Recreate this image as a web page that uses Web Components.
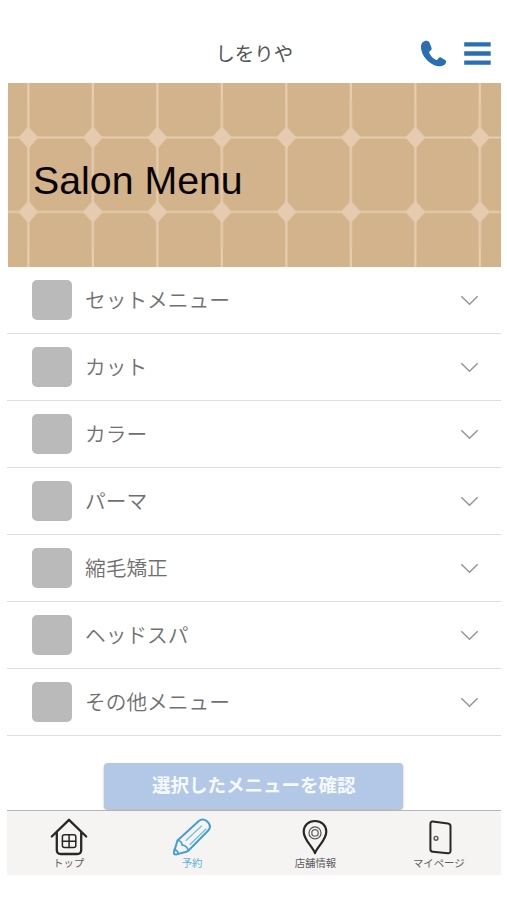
<!DOCTYPE html>
<html lang="ja">
<head>
<meta charset="utf-8">
<meta name="viewport" content="width=device-width, initial-scale=1">
<title>しをりや</title>
<style>
html, body { margin: 0; background: #fff; }
body { font-family: "Noto Sans CJK JP", "Liberation Sans", sans-serif; }
</style>
</head>
<body>
<salon-app></salon-app>
<script>
function define(name, html) {
  customElements.define(name, class extends HTMLElement {
    constructor() {
      super();
      const t = document.createElement('template');
      t.innerHTML = html;
      this.attachShadow({ mode: 'open' }).appendChild(t.content.cloneNode(true));
    }
  });
}

define('salon-header', `
<style>
:host { display: grid; grid-template-columns: 1fr auto 1fr; align-items: center; height: 60px; padding: 23px 9.5px 0 9.5px; box-sizing: content-box; }
h1 { grid-column: 2; margin: 0 0 0 1px; font-size: 19.4px; font-weight: 400; line-height: 28px; color: #555; white-space: nowrap; }
nav { justify-self: end; display: flex; gap: 17px; align-items: center; }
svg { display: block; }
</style>
<h1><slot></slot></h1>
<nav>
<svg width="27" height="27" viewBox="0 0 27 27" fill="#2b6fb3"><path d="M4.200 1.300C2 2.200.500 4.600 1 8c.7 5.400 3.700 10.500 8 14 3.900 3.200 8.800 4.900 12.500 4.100 2.300-.5 4.200-1.900 4.500-3.900.2-1.100-.1-1.700-.9-2.200l-3.800-2.300c-1-.6-1.900-.4-2.600.4l-1.200 1.400c-.5.6-1.100.7-1.800.300-2.900-1.700-5-3.900-6.400-6.900-.3-.7-.2-1.200.4-1.700l1.200-1c.8-.7 1-1.500.6-2.500L9.600 2.800C8.800.9 6.500.3 4.200 1.300z"/></svg>
<svg width="27" height="23" viewBox="0 0 27 23" fill="#2b6fb3"><path d="M.2.200h26.500v4.400H.2zM.2 9.300h26.500v4.400H.2zM.2 18.400h26.500v4.400H.2z"/></svg>
</nav>`);

define('salon-banner', `
<style>
:host { display: grid; height: 184px; margin-left: .5px; background: #d3b38b; overflow: hidden; }
svg, h2 { grid-area: 1 / 1; }
svg { display: block; }
h2 { margin: 0; align-self: center; padding: 10px 0 0 25.5px; font: 400 39.3px/46px "Liberation Sans", sans-serif; color: #080402; z-index: 1; }
</style>
<svg width="494" height="184" viewBox="7.500 83 494 184">
<defs><pattern id="tile" x="-4.400" y="100.300" width="64.500" height="74.400" patternUnits="userSpaceOnUse">
<path d="M32.250 0V74.400M0 37.200H64.500" stroke="#e6cdb0" stroke-width="2.200"/>
<path d="M32.250 26L42.200 37.200 32.250 48.400 22.300 37.200z" fill="#e5ccb0"/></pattern></defs>
<rect x="7" y="100.300" width="495" height="148.800" fill="url(#tile)"/>
<path d="M27.850 83v18M92.350 83v18M156.850 83v18M221.350 83v18M285.850 83v18M350.350 83v18M414.850 83v18M479.350 83v18M27.850 249v18M92.350 249v18M156.850 249v18M221.350 249v18M285.850 249v18M350.350 249v18M414.850 249v18M479.350 249v18" stroke="#e6cdb0" stroke-width="2.200"/>
</svg>
<h2><slot></slot></h2>`);

define('menu-row', `
<style>
:host { display: flex; align-items: center; box-sizing: border-box; height: 67px; padding: 0 21.5px 0 24.500px; border-bottom: 1.500px solid #dedede; color: #707070; }
i { width: 40px; height: 40px; border-radius: 5px; background: #bababa; flex: none; }
span { flex: 1; margin-left: 13.500px; padding-bottom: 2px; font-size: 20.700px; line-height: 30px; font-weight: 350; white-space: nowrap; }
svg { display: block; }
</style>
<i></i><span><slot></slot></span>
<svg width="19" height="11" viewBox="0 0 19 11" fill="none" stroke="#969696" stroke-width="1.500"><path d="M1.300 1.200l8.200 8 8.200-8"/></svg>`);

define('confirm-button', `
<style>
:host { display: flex; justify-content: center; padding-top: 27px; }
button { width: 299px; height: 46px; padding: 0 0 4px; border: 0; border-radius: 4px; background: #b3c8e6; box-shadow: 0 1px 2px #aaa; color: #f5faff; font: 700 18.500px/26px "Noto Sans CJK JP", sans-serif; white-space: nowrap; }
</style>
<button type="button"><slot></slot></button>`);

define('tab-item', `
<style>
:host { display: flex; flex-direction: column; align-items: center; color: #5d5d5d; }
:host([active]) { color: #62b1dc; }
div { height: 37px; }
span { font-size: 10.400px; line-height: 15px; white-space: nowrap; }
</style>
<div><slot name="icon"></slot></div><span><slot></slot></span>`);

define('tab-bar', `
<style>
:host { display: grid; grid-template-columns: repeat(4, 1fr); box-sizing: border-box; height: 65px; margin-top: 1px; padding-top: 7px; border-top: 1.500px solid #b5b5b5; background: #f5f4f3; position: relative; }
</style><slot></slot>`);

define('salon-app', `
<style>
:host { display: block; width: 493.500px; margin-left: 7px; }
tab-item svg { display: block; }
</style>
<salon-header>しをりや</salon-header>
<salon-banner>Salon Menu</salon-banner>
<menu-row>セットメニュー</menu-row>
<menu-row>カット</menu-row>
<menu-row>カラー</menu-row>
<menu-row>パーマ</menu-row>
<menu-row>縮毛矯正</menu-row>
<menu-row>ヘッドスパ</menu-row>
<menu-row>その他メニュー</menu-row>
<confirm-button>選択したメニューを確認</confirm-button>
<tab-bar>
<tab-item><svg slot="icon" width="38" height="38" viewBox="0 0 38 38" fill="none" stroke="#272727" stroke-width="2.300" stroke-linecap="round" stroke-linejoin="round"><path d="M1.800 18.500L19 1.800l17.200 16.700M6.800 14.500V32q0 4 4 4h16.400q4 0 4-4V14.500"/><rect x="12.400" y="16.800" width="13.400" height="12.800" rx="2" stroke-width="1.500"/><path d="M19.100 16.800v12.800M12.400 23.200h13.400" stroke-width="1.500"/></svg>トップ</tab-item>
<tab-item active><svg slot="icon" width="38" height="38" viewBox="0 0 38 38" fill="none" stroke="#429fd5" stroke-width="2" stroke-linecap="round" stroke-linejoin="round"><path d="M4.500 22.500L25.500 3.200q4-3.300 8.200-.2 5.300 4.300 2 9L15.800 32.300q-1 1-2.500 1.500L3.500 36.400q-3.100.7-2.500-2.500z"/><path d="M4.500 22.500q2.500 0 3.500 1.500 1.200 1.500 1 3 4.800.5 6.300 5.300M1.200 31.500q3.400.7 4.200 4" stroke-width="1.600"/><path d="M13 22.500L28.500 8M17 26.500L33 11" stroke-width="1.100" stroke="#76b9df"/></svg>予約</tab-item>
<tab-item><svg slot="icon" width="38" height="38" viewBox="0 0 38 38" fill="none" stroke="#272727" stroke-linejoin="round"><path d="M19 35.200C17 29 7.700 22 7.700 13.700 7.700 7.500 12.500 3 19 3s11.300 4.500 11.300 10.700C30.300 22 21 29 19 35.200z" stroke-width="2.200"/><circle cx="19" cy="14.900" r="6" stroke="#555" stroke-width="1.200"/><circle cx="19" cy="14.900" r="3.200" stroke="#666" stroke-width="1.300"/></svg>店舗情報</tab-item>
<tab-item><svg slot="icon" width="38" height="38" viewBox="0 0 38 38" fill="none" stroke="#272727" stroke-width="2" stroke-linejoin="round"><path d="M12.600 3.600l15.300 1.800q2.600.3 2.600 2.800v24.500q0 2.600-2.600 2.500l-15-1.500q-2.500-.2-2.500-2.500V6q0-2.600 2.200-2.400z"/><circle cx="16" cy="20.300" r="1.900" stroke="#555" stroke-width="1.400"/></svg>マイページ</tab-item>
</tab-bar>`);
</script>
</body>
</html>
